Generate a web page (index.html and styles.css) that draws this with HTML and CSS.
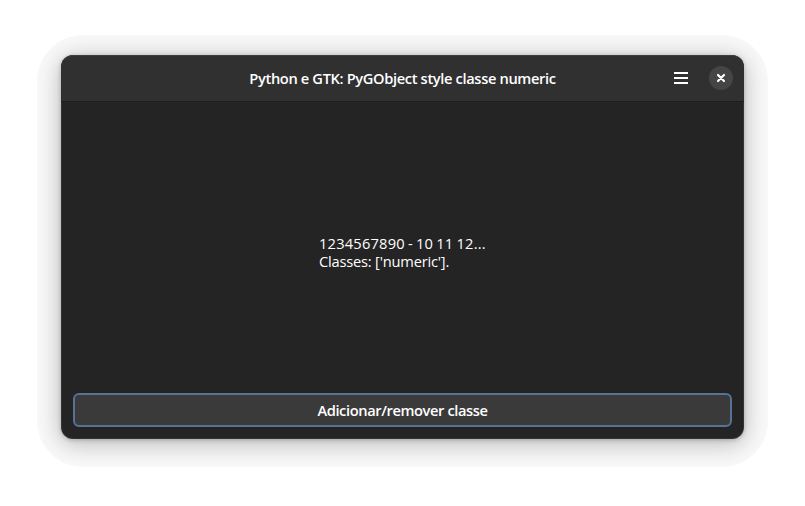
FILE: index.html
```html
<!DOCTYPE html>
<html lang="pt-BR">
<head>
<meta charset="utf-8">
<title>PyGObject</title>
<link rel="stylesheet" href="styles.css">
</head>
<body>
<div class="halo">
<main class="window">
  <header class="headerbar">
    <h1 class="title">Python e GTK: PyGObject style classe numeric</h1>
    <div class="controls">
      <button class="menu" aria-label="Menu"><svg width="16" height="16" viewBox="0 0 16 16"><path d="M1 2h14v2H1zM1 7h14v2H1zM1 12h14v2H1z" fill="#fff"/></svg></button>
      <button class="close" aria-label="Fechar"><svg width="16" height="16" viewBox="0 0 16 16"><path d="M5 5l6 6M11 5l-6 6" stroke="#fff" stroke-width="2.2" stroke-linecap="round"/></svg></button>
    </div>
  </header>
  <section class="content"><p class="label"><span class="numbers">1234567890 - 10 11 12...</span><br><span class="classes">Classes: ['numeric'].</span></p></section>
  <button class="action">Adicionar/remover classe</button>
</main>
</div>
</body>
</html>
```
FILE: styles.css
```css
* { box-sizing: border-box; }
body {
  margin: 0;
  height: 506px;
  padding: 35px 37px 39px;
  background: #fff;
  font-family: "Open Sans", "Noto Sans", sans-serif;
  color: #fff;
  overflow: hidden;
}
button { font: inherit; color: inherit; border: 0; padding: 0; }
.halo {
  width: 731px;
  height: 432px;
  padding: 20px 24px 28px;
  border-radius: 46px;
  background: #f9f9f9;
  overflow: hidden;
}
.window {
  width: 683px;
  height: 384px;
  display: flex;
  flex-direction: column;
  background: #242424;
  border-radius: 12px;
  box-shadow: inset 0 0 0 1px rgba(255,255,255,.07), 0 1px 4px rgba(0,0,0,.22), 0 4px 24px 1px rgba(0,0,0,.26);
}
.headerbar {
  height: 47px;
  display: grid;
  grid-template-columns: 90px 1fr 90px;
  align-items: center;
  background: #303030;
  border-radius: 12px 12px 0 0;
  border-bottom: 1px solid #1e1e1e;
  box-shadow: inset 0 1px rgba(255,255,255,.07);
}
.title { grid-column: 2; margin: 0; text-align: center; font-size: 14.67px; font-weight: 600; letter-spacing: -.36px; white-space: nowrap; }
.controls { display: flex; justify-content: flex-end; align-items: center; gap: 8px; padding-right: 11px; }
.menu, .close { display: grid; place-items: center; background: none; }
.menu { width: 40px; height: 34px; }
.close { width: 24px; height: 24px; border-radius: 50%; background: #454545; }
.content { flex: 1; display: grid; place-items: center; padding-top: 9px; }
.label { margin: 0; width: 167px; font-size: 14.67px; line-height: 18px; white-space: nowrap; }
.numbers { letter-spacing: .2px; word-spacing: -.9px; }
.classes { letter-spacing: -.2px; }
.action {
  height: 34px;
  margin: 0 12px 12px;
  background: #3a3a3a;
  border: 2px solid #567397;
  border-radius: 6px;
  font-size: 14.67px;
  font-weight: 600;
  letter-spacing: -.4px;
}
```
